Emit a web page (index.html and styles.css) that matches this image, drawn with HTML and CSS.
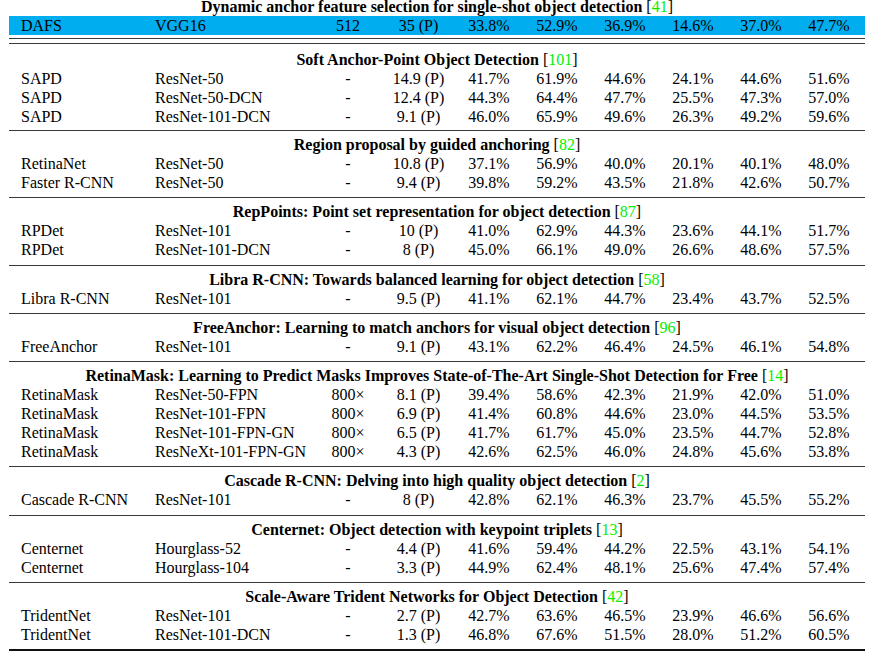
FILE: index.html
```html
<!DOCTYPE html>
<html>
<head>
<meta charset="utf-8">
<link rel="stylesheet" href="styles.css">
</head>
<body>
<div class="sheet">
  <div class="title">Dynamic anchor feature selection for single-shot object detection <span class="cite">[<span class="num">41</span>]</span></div>
  <div class="row hl"><span class="c1">DAFS</span><span class="c2">VGG16</span><span class="cc">512</span><span class="cc">35 (P)</span><span class="cc">33.8%</span><span class="cc">52.9%</span><span class="cc">36.9%</span><span class="cc">14.6%</span><span class="cc">37.0%</span><span class="cc">47.7%</span></div>
  <div class="double"></div>

  <section class="group first">
    <div class="title">Soft Anchor-Point Object Detection <span class="cite">[<span class="num">101</span>]</span></div>
    <div class="row"><span class="c1">SAPD</span><span class="c2">ResNet-50</span><span class="cc">-</span><span class="cc">14.9 (P)</span><span class="cc">41.7%</span><span class="cc">61.9%</span><span class="cc">44.6%</span><span class="cc">24.1%</span><span class="cc">44.6%</span><span class="cc">51.6%</span></div>
    <div class="row"><span class="c1">SAPD</span><span class="c2">ResNet-50-DCN</span><span class="cc">-</span><span class="cc">12.4 (P)</span><span class="cc">44.3%</span><span class="cc">64.4%</span><span class="cc">47.7%</span><span class="cc">25.5%</span><span class="cc">47.3%</span><span class="cc">57.0%</span></div>
    <div class="row"><span class="c1">SAPD</span><span class="c2">ResNet-101-DCN</span><span class="cc">-</span><span class="cc">9.1 (P)</span><span class="cc">46.0%</span><span class="cc">65.9%</span><span class="cc">49.6%</span><span class="cc">26.3%</span><span class="cc">49.2%</span><span class="cc">59.6%</span></div>
  </section>

  <section class="group">
    <div class="title">Region proposal by guided anchoring <span class="cite">[<span class="num">82</span>]</span></div>
    <div class="row"><span class="c1">RetinaNet</span><span class="c2">ResNet-50</span><span class="cc">-</span><span class="cc">10.8 (P)</span><span class="cc">37.1%</span><span class="cc">56.9%</span><span class="cc">40.0%</span><span class="cc">20.1%</span><span class="cc">40.1%</span><span class="cc">48.0%</span></div>
    <div class="row"><span class="c1">Faster R-CNN</span><span class="c2">ResNet-50</span><span class="cc">-</span><span class="cc">9.4 (P)</span><span class="cc">39.8%</span><span class="cc">59.2%</span><span class="cc">43.5%</span><span class="cc">21.8%</span><span class="cc">42.6%</span><span class="cc">50.7%</span></div>
  </section>

  <section class="group">
    <div class="title">RepPoints: Point set representation for object detection <span class="cite">[<span class="num">87</span>]</span></div>
    <div class="row"><span class="c1">RPDet</span><span class="c2">ResNet-101</span><span class="cc">-</span><span class="cc">10 (P)</span><span class="cc">41.0%</span><span class="cc">62.9%</span><span class="cc">44.3%</span><span class="cc">23.6%</span><span class="cc">44.1%</span><span class="cc">51.7%</span></div>
    <div class="row"><span class="c1">RPDet</span><span class="c2">ResNet-101-DCN</span><span class="cc">-</span><span class="cc">8 (P)</span><span class="cc">45.0%</span><span class="cc">66.1%</span><span class="cc">49.0%</span><span class="cc">26.6%</span><span class="cc">48.6%</span><span class="cc">57.5%</span></div>
  </section>

  <section class="group">
    <div class="title">Libra R-CNN: Towards balanced learning for object detection <span class="cite">[<span class="num">58</span>]</span></div>
    <div class="row"><span class="c1">Libra R-CNN</span><span class="c2">ResNet-101</span><span class="cc">-</span><span class="cc">9.5 (P)</span><span class="cc">41.1%</span><span class="cc">62.1%</span><span class="cc">44.7%</span><span class="cc">23.4%</span><span class="cc">43.7%</span><span class="cc">52.5%</span></div>
  </section>

  <section class="group">
    <div class="title">FreeAnchor: Learning to match anchors for visual object detection <span class="cite">[<span class="num">96</span>]</span></div>
    <div class="row"><span class="c1">FreeAnchor</span><span class="c2">ResNet-101</span><span class="cc">-</span><span class="cc">9.1 (P)</span><span class="cc">43.1%</span><span class="cc">62.2%</span><span class="cc">46.4%</span><span class="cc">24.5%</span><span class="cc">46.1%</span><span class="cc">54.8%</span></div>
  </section>

  <section class="group">
    <div class="title">RetinaMask: Learning to Predict Masks Improves State-of-The-Art Single-Shot Detection for Free <span class="cite">[<span class="num">14</span>]</span></div>
    <div class="row"><span class="c1">RetinaMask</span><span class="c2">ResNet-50-FPN</span><span class="cc">800×</span><span class="cc">8.1 (P)</span><span class="cc">39.4%</span><span class="cc">58.6%</span><span class="cc">42.3%</span><span class="cc">21.9%</span><span class="cc">42.0%</span><span class="cc">51.0%</span></div>
    <div class="row"><span class="c1">RetinaMask</span><span class="c2">ResNet-101-FPN</span><span class="cc">800×</span><span class="cc">6.9 (P)</span><span class="cc">41.4%</span><span class="cc">60.8%</span><span class="cc">44.6%</span><span class="cc">23.0%</span><span class="cc">44.5%</span><span class="cc">53.5%</span></div>
    <div class="row"><span class="c1">RetinaMask</span><span class="c2">ResNet-101-FPN-GN</span><span class="cc">800×</span><span class="cc">6.5 (P)</span><span class="cc">41.7%</span><span class="cc">61.7%</span><span class="cc">45.0%</span><span class="cc">23.5%</span><span class="cc">44.7%</span><span class="cc">52.8%</span></div>
    <div class="row"><span class="c1">RetinaMask</span><span class="c2">ResNeXt-101-FPN-GN</span><span class="cc">800×</span><span class="cc">4.3 (P)</span><span class="cc">42.6%</span><span class="cc">62.5%</span><span class="cc">46.0%</span><span class="cc">24.8%</span><span class="cc">45.6%</span><span class="cc">53.8%</span></div>
  </section>

  <section class="group">
    <div class="title">Cascade R-CNN: Delving into high quality object detection <span class="cite">[<span class="num">2</span>]</span></div>
    <div class="row"><span class="c1">Cascade R-CNN</span><span class="c2">ResNet-101</span><span class="cc">-</span><span class="cc">8 (P)</span><span class="cc">42.8%</span><span class="cc">62.1%</span><span class="cc">46.3%</span><span class="cc">23.7%</span><span class="cc">45.5%</span><span class="cc">55.2%</span></div>
  </section>

  <section class="group">
    <div class="title">Centernet: Object detection with keypoint triplets <span class="cite">[<span class="num">13</span>]</span></div>
    <div class="row"><span class="c1">Centernet</span><span class="c2">Hourglass-52</span><span class="cc">-</span><span class="cc">4.4 (P)</span><span class="cc">41.6%</span><span class="cc">59.4%</span><span class="cc">44.2%</span><span class="cc">22.5%</span><span class="cc">43.1%</span><span class="cc">54.1%</span></div>
    <div class="row"><span class="c1">Centernet</span><span class="c2">Hourglass-104</span><span class="cc">-</span><span class="cc">3.3 (P)</span><span class="cc">44.9%</span><span class="cc">62.4%</span><span class="cc">48.1%</span><span class="cc">25.6%</span><span class="cc">47.4%</span><span class="cc">57.4%</span></div>
  </section>

  <section class="group last">
    <div class="title">Scale-Aware Trident Networks for Object Detection <span class="cite">[<span class="num">42</span>]</span></div>
    <div class="row"><span class="c1">TridentNet</span><span class="c2">ResNet-101</span><span class="cc">-</span><span class="cc">2.7 (P)</span><span class="cc">42.7%</span><span class="cc">63.6%</span><span class="cc">46.5%</span><span class="cc">23.9%</span><span class="cc">46.6%</span><span class="cc">56.6%</span></div>
    <div class="row"><span class="c1">TridentNet</span><span class="c2">ResNet-101-DCN</span><span class="cc">-</span><span class="cc">1.3 (P)</span><span class="cc">46.8%</span><span class="cc">67.6%</span><span class="cc">51.5%</span><span class="cc">28.0%</span><span class="cc">51.2%</span><span class="cc">60.5%</span></div>
  </section>
</div>
</body>
</html>
```

FILE: styles.css
```css
html, body {
  margin: 0;
  padding: 0;
  background: #ffffff;
}

body {
  font-family: "Liberation Serif", "Times New Roman", serif;
  font-size: 16px;
  color: #000000;
  overflow: hidden;
}

.sheet {
  width: 856px;
  margin: -3px 0 0 9px;
}

.title {
  height: 19px;
  line-height: 19px;
  text-align: center;
  font-weight: bold;
  white-space: nowrap;
}

.cite {
  font-weight: normal;
}

.cite .num {
  color: #00f000;
}

.row {
  display: grid;
  grid-template-columns: 134px 171px 68px 73px repeat(6, 68px);
  height: 19px;
  line-height: 19px;
  white-space: nowrap;
}

.row.hl {
  background: #00aeef;
}

.c1 {
  padding-left: 12px;
}

.c2 {
  padding-left: 12px;
}

.cc {
  text-align: center;
}

.double {
  margin-top: 3px;
  height: 4px;
  border-top: 1px solid #3a3a3a;
  border-bottom: 1px solid #3a3a3a;
}

.group {
  border-top: 1px solid #3a3a3a;
  padding: 4px 0 5.25px;
}

.group.first {
  border-top: none;
  padding: 6px 0 4px;
}

.group.last {
  border-bottom: 2px solid #111111;
}
```
